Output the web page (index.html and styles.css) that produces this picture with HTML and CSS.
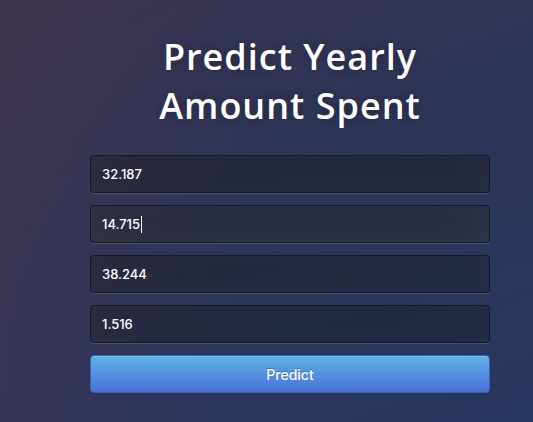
FILE: index.html
```html
<!DOCTYPE html>
<html>
<head>
<meta charset="utf-8">
<link rel="stylesheet" href="styles.css">
</head>
<body>
<div class="login">
  <h1 class="title">Predict Yearly<br>Amount Spent</h1>
  <form class="form">
    <div class="field">32.187</div>
    <div class="field field-focus">14.715<span class="caret"></span></div>
    <div class="field">38.244</div>
    <div class="field">1.516</div>
    <button type="button" class="btn">Predict</button>
  </form>
</div>
</body>
</html>
```

FILE: styles.css
```css
html, body {
  margin: 0;
  padding: 0;
  height: 100%;
}
body {
  background: linear-gradient(160deg, #3a3452 0%, #2d3558 45%, #283760 100%);
  position: relative;
  overflow: hidden;
}
body::before {
  content: "";
  position: absolute;
  inset: 0;
  background: linear-gradient(to right, rgba(70, 52, 80, 0.45) 0%, rgba(70, 52, 80, 0) 45%);
  pointer-events: none;
}
.login {
  position: relative;
  width: 400px;
  margin-left: 90px;
  padding-top: 32px;
}
.title {
  margin: 0 0 25px;
  font-family: "Open Sans", sans-serif;
  font-weight: 600;
  font-size: 36px;
  line-height: 49px;
  letter-spacing: 1px;
  color: #fff;
  text-align: center;
  text-shadow: 0 0 10px rgba(0, 0, 0, 0.3);
}
.form {
  display: flex;
  flex-direction: column;
  gap: 12px;
  margin: 0;
}
.field {
  box-sizing: border-box;
  height: 38px;
  padding: 0 11px;
  display: flex;
  align-items: center;
  font-family: "Inter", "Liberation Sans", sans-serif;
  font-size: 13px;
  font-weight: 500;
  color: #fff;
  background: rgba(0, 0, 0, 0.3);
  border: 1px solid rgba(0, 0, 0, 0.35);
  border-radius: 4px;
  box-shadow: inset 0 -5px 45px rgba(100, 100, 100, 0.15), 0 1px 1px rgba(255, 255, 255, 0.15);
}
.field-focus {
  box-shadow: inset 0 -5px 45px rgba(100, 100, 100, 0.3), 0 1px 1px rgba(255, 255, 255, 0.15);
}
.caret {
  display: inline-block;
  width: 1px;
  height: 17px;
  background: #fff;
  margin-left: 1px;
}
.btn {
  height: 38px;
  box-sizing: border-box;
  font-family: "Inter", "Liberation Sans", sans-serif;
  font-size: 14px;
  font-weight: 500;
  color: #fff;
  text-shadow: 0 -1px 0 rgba(0, 0, 0, 0.25);
  background: linear-gradient(to bottom, #5fb3e3, #4a70d9);
  border: 1px solid #3762bc;
  border-radius: 4px;
  box-shadow: inset 0 1px 0 rgba(255, 255, 255, 0.2), 0 1px 2px rgba(0, 0, 0, 0.05);
  padding: 0;
  cursor: pointer;
}
```
